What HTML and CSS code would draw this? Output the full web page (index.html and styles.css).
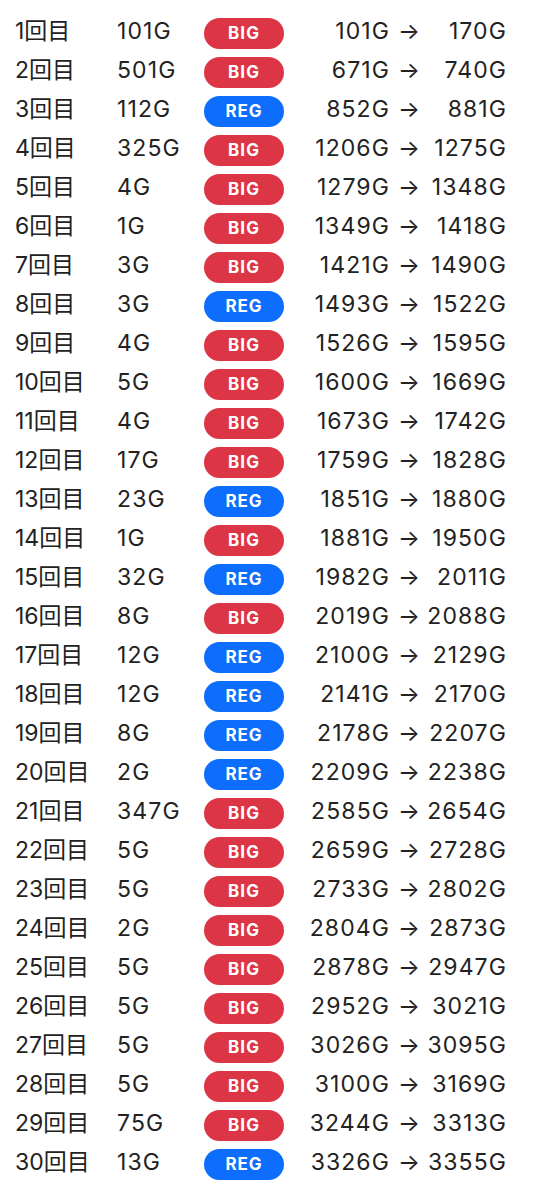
FILE: index.html
```html
<!DOCTYPE html>
<html lang="ja">
<head>
    <meta charset="UTF-8">
    <meta name="viewport" content="width=device-width, initial-scale=1.0">
    <title>ボーナス履歴</title>
    <link rel="stylesheet" href="styles.css">
</head>
<body>
    <div class="history">
        <div class="row"><span class="no">1回目</span><span class="games">101G</span><span class="badge big">BIG</span><span class="from">101G</span><span class="arrow">→</span><span class="to">170G</span></div>
        <div class="row"><span class="no">2回目</span><span class="games">501G</span><span class="badge big">BIG</span><span class="from">671G</span><span class="arrow">→</span><span class="to">740G</span></div>
        <div class="row"><span class="no">3回目</span><span class="games">112G</span><span class="badge reg">REG</span><span class="from">852G</span><span class="arrow">→</span><span class="to">881G</span></div>
        <div class="row"><span class="no">4回目</span><span class="games">325G</span><span class="badge big">BIG</span><span class="from">1206G</span><span class="arrow">→</span><span class="to">1275G</span></div>
        <div class="row"><span class="no">5回目</span><span class="games">4G</span><span class="badge big">BIG</span><span class="from">1279G</span><span class="arrow">→</span><span class="to">1348G</span></div>
        <div class="row"><span class="no">6回目</span><span class="games">1G</span><span class="badge big">BIG</span><span class="from">1349G</span><span class="arrow">→</span><span class="to">1418G</span></div>
        <div class="row"><span class="no">7回目</span><span class="games">3G</span><span class="badge big">BIG</span><span class="from">1421G</span><span class="arrow">→</span><span class="to">1490G</span></div>
        <div class="row"><span class="no">8回目</span><span class="games">3G</span><span class="badge reg">REG</span><span class="from">1493G</span><span class="arrow">→</span><span class="to">1522G</span></div>
        <div class="row"><span class="no">9回目</span><span class="games">4G</span><span class="badge big">BIG</span><span class="from">1526G</span><span class="arrow">→</span><span class="to">1595G</span></div>
        <div class="row"><span class="no">10回目</span><span class="games">5G</span><span class="badge big">BIG</span><span class="from">1600G</span><span class="arrow">→</span><span class="to">1669G</span></div>
        <div class="row"><span class="no">11回目</span><span class="games">4G</span><span class="badge big">BIG</span><span class="from">1673G</span><span class="arrow">→</span><span class="to">1742G</span></div>
        <div class="row"><span class="no">12回目</span><span class="games">17G</span><span class="badge big">BIG</span><span class="from">1759G</span><span class="arrow">→</span><span class="to">1828G</span></div>
        <div class="row"><span class="no">13回目</span><span class="games">23G</span><span class="badge reg">REG</span><span class="from">1851G</span><span class="arrow">→</span><span class="to">1880G</span></div>
        <div class="row"><span class="no">14回目</span><span class="games">1G</span><span class="badge big">BIG</span><span class="from">1881G</span><span class="arrow">→</span><span class="to">1950G</span></div>
        <div class="row"><span class="no">15回目</span><span class="games">32G</span><span class="badge reg">REG</span><span class="from">1982G</span><span class="arrow">→</span><span class="to">2011G</span></div>
        <div class="row"><span class="no">16回目</span><span class="games">8G</span><span class="badge big">BIG</span><span class="from">2019G</span><span class="arrow">→</span><span class="to">2088G</span></div>
        <div class="row"><span class="no">17回目</span><span class="games">12G</span><span class="badge reg">REG</span><span class="from">2100G</span><span class="arrow">→</span><span class="to">2129G</span></div>
        <div class="row"><span class="no">18回目</span><span class="games">12G</span><span class="badge reg">REG</span><span class="from">2141G</span><span class="arrow">→</span><span class="to">2170G</span></div>
        <div class="row"><span class="no">19回目</span><span class="games">8G</span><span class="badge reg">REG</span><span class="from">2178G</span><span class="arrow">→</span><span class="to">2207G</span></div>
        <div class="row"><span class="no">20回目</span><span class="games">2G</span><span class="badge reg">REG</span><span class="from">2209G</span><span class="arrow">→</span><span class="to">2238G</span></div>
        <div class="row"><span class="no">21回目</span><span class="games">347G</span><span class="badge big">BIG</span><span class="from">2585G</span><span class="arrow">→</span><span class="to">2654G</span></div>
        <div class="row"><span class="no">22回目</span><span class="games">5G</span><span class="badge big">BIG</span><span class="from">2659G</span><span class="arrow">→</span><span class="to">2728G</span></div>
        <div class="row"><span class="no">23回目</span><span class="games">5G</span><span class="badge big">BIG</span><span class="from">2733G</span><span class="arrow">→</span><span class="to">2802G</span></div>
        <div class="row"><span class="no">24回目</span><span class="games">2G</span><span class="badge big">BIG</span><span class="from">2804G</span><span class="arrow">→</span><span class="to">2873G</span></div>
        <div class="row"><span class="no">25回目</span><span class="games">5G</span><span class="badge big">BIG</span><span class="from">2878G</span><span class="arrow">→</span><span class="to">2947G</span></div>
        <div class="row"><span class="no">26回目</span><span class="games">5G</span><span class="badge big">BIG</span><span class="from">2952G</span><span class="arrow">→</span><span class="to">3021G</span></div>
        <div class="row"><span class="no">27回目</span><span class="games">5G</span><span class="badge big">BIG</span><span class="from">3026G</span><span class="arrow">→</span><span class="to">3095G</span></div>
        <div class="row"><span class="no">28回目</span><span class="games">5G</span><span class="badge big">BIG</span><span class="from">3100G</span><span class="arrow">→</span><span class="to">3169G</span></div>
        <div class="row"><span class="no">29回目</span><span class="games">75G</span><span class="badge big">BIG</span><span class="from">3244G</span><span class="arrow">→</span><span class="to">3313G</span></div>
        <div class="row"><span class="no">30回目</span><span class="games">13G</span><span class="badge reg">REG</span><span class="from">3326G</span><span class="arrow">→</span><span class="to">3355G</span></div>
    </div>
</body>
</html>
```

FILE: styles.css
```css
body {
    font-family: 'Inter', 'Noto Sans CJK JP', sans-serif;
    background: #fff;
    color: #222;
    margin: 0;
}

.history {
    padding: 12px 0 0 15px;
}

.row {
    display: grid;
    grid-template-columns: 102px 87px 80px 105px 27px 90px;
    align-items: center;
    height: 39px;
    font-size: 23px;
    line-height: 1;
}

.games,
.from,
.to {
    letter-spacing: 1.1px;
}

.from,
.to {
    text-align: right;
    margin-right: -1px;
}

.arrow {
    padding-left: 9px;
}

/* Badges */
.badge {
    height: 31px;
    line-height: 31px;
    margin-top: 3px;
    border-radius: 16px;
    color: #fff;
    font-size: 17px;
    font-weight: 700;
    text-align: center;
    letter-spacing: 1px;
}

.big {
    background: #dc3545;
}

.reg {
    background: #0d6efd;
}
```
